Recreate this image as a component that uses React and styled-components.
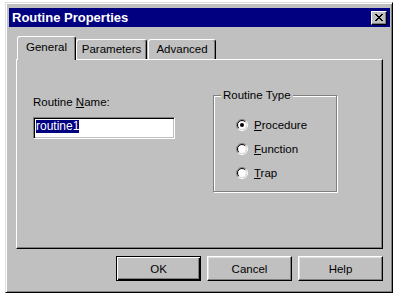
import React from 'react';
import styled, { createGlobalStyle } from 'styled-components';

const Global = createGlobalStyle`
  html, body { margin: 0; padding: 0; background: #fff; }
  body {
    font-family: "Liberation Sans", Arial, sans-serif;
    font-size: 11.5px;
    color: #000;
  }
  * { box-sizing: border-box; }
`;

const Stage = styled.div`
  width: 399px;
  height: 297px;
  padding: 2px 0 0 5px;
  background: #fff;
`;

const Window = styled.div`
  width: 388px;
  height: 291px;
  background: #c0c0c0;
  border: 1px solid;
  border-color: #dfdfdf #000 #000 #dfdfdf;
  box-shadow: inset 1px 1px #fff, inset -1px -1px #808080;
  padding: 5px 2px 2px 3px;
  display: flex;
  flex-direction: column;
`;

const TitleBar = styled.div`
  height: 19px;
  background: #000080;
  display: flex;
  align-items: center;
  justify-content: space-between;
  padding: 0 3px 0 3px;
`;

const Title = styled.span`
  color: #fff;
  font-weight: bold;
  font-size: 13px;
  line-height: 19px;
`;

const CloseButton = styled.button`
  width: 16px;
  height: 14px;
  padding: 0;
  margin: 0;
  background: #c0c0c0;
  border: 1px solid;
  border-color: #fff #000 #000 #fff;
  box-shadow: inset -1px -1px #808080;
  display: flex;
  align-items: center;
  justify-content: center;
`;

const Body = styled.div`
  flex: 1;
  display: flex;
  flex-direction: column;
  padding: 9px 7px 0 7px;
`;

const TabRow = styled.div`
  display: flex;
  align-items: flex-end;
  height: 23px;
  padding-left: 1px;
  position: relative;
  z-index: 1;
`;

const Tab = styled.div`
  height: ${p => (p.$active ? '24px' : '20px')};
  margin-bottom: ${p => (p.$active ? '-1px' : '0')};
  margin-left: ${p => p.$gap || 0}px;
  width: ${p => p.$w}px;
  background: #c0c0c0;
  border-top: 1px solid #fff;
  border-left: 1px solid #fff;
  border-right: 1px solid #000;
  border-radius: 3px 3px 0 0;
  box-shadow: inset -1px 0 #808080;
  display: flex;
  justify-content: center;
  padding-top: ${p => (p.$active ? '4px' : '3px')};
  line-height: 13px;
`;

const Panel = styled.div`
  height: 190px;
  border: 1px solid;
  border-color: #fff #000 #000 #fff;
  box-shadow: inset -1px -1px #808080;
  padding: 35px 0 0 16px;
  display: flex;
  align-items: flex-start;
`;

const NameColumn = styled.div`
  display: flex;
  flex-direction: column;
  margin-top: 1px;
  width: 142px;
`;

const Label = styled.label`
  line-height: 13px;
  height: 13px;
`;

const TextBox = styled.div`
  margin-top: 8px;
  height: 22px;
  width: 142px;
  background: #fff;
  border: 1px solid;
  border-color: #808080 #fff #fff #808080;
  box-shadow: inset 1px 1px #000, inset -1px -1px #c0c0c0;
  padding: 2px 0 0 2px;
  display: flex;
  align-items: flex-start;
`;

const Selected = styled.span`
  background: #000080;
  color: #fff;
  line-height: 13px;
  height: 13px;
  font-size: 12px;
`;

const GroupBox = styled.div`
  position: relative;
  margin-left: 38px;
  width: 124px;
  height: 97px;
  border: 1px solid #808080;
  box-shadow: inset 1px 1px #fff, 1px 1px #fff;
  padding: 17px 0 0 22px;
  display: flex;
  flex-direction: column;
`;

const Legend = styled.span`
  position: absolute;
  top: -7px;
  left: 7px;
  padding: 0 2px;
  background: #c0c0c0;
  line-height: 13px;
`;

const RadioRow = styled.div`
  height: 24px;
  display: flex;
  align-items: center;
  gap: 6px;
  line-height: 13px;
`;

const ButtonRow = styled.div`
  display: flex;
  justify-content: flex-end;
  gap: 6px;
  margin-top: 7px;
`;

const Button = styled.button`
  width: 85px;
  height: 25px;
  padding: 0;
  margin: 0;
  font-family: inherit;
  font-size: 11.5px;
  color: #000;
  background: #c0c0c0;
  border: 1px solid;
  border-color: ${p => (p.$default ? '#000' : '#fff #000 #000 #fff')};
  box-shadow: ${p =>
    p.$default
      ? 'inset 1px 1px #fff, inset -1px -1px #000, inset -2px -2px #808080'
      : 'inset -1px -1px #808080, inset 1px 1px #dfdfdf'};
`;

const CloseGlyph = () => (
  <svg width="8" height="7" viewBox="0 0 8 7" shapeRendering="crispEdges">
    <path
      fill="#000"
      d="M0 0h2v1h-2z M6 0h2v1h-2z M1 1h2v1h-2z M5 1h2v1h-2z M2 2h4v1h-4z M3 3h2v1h-2z M2 4h4v1h-4z M1 5h2v1h-2z M5 5h2v1h-2z M0 6h2v1h-2z M6 6h2v1h-2z"
    />
  </svg>
);

const arc = (r, first) => {
  const a = r * Math.SQRT1_2;
  const p1 = `${6 - a} ${6 + a}`;
  const p2 = `${6 + a} ${6 - a}`;
  return first ? `M${p1} A${r} ${r} 0 0 1 ${p2}` : `M${p2} A${r} ${r} 0 0 1 ${p1}`;
};

const RadioIcon = ({ checked }) => (
  <svg width="12" height="12" viewBox="0 0 12 12">
    <circle cx="6" cy="6" r="4.2" fill="#fff" />
    <path d={arc(5.5, true)} stroke="#808080" fill="none" strokeWidth="1" />
    <path d={arc(5.5, false)} stroke="#fff" fill="none" strokeWidth="1" />
    <path d={arc(4.5, true)} stroke="#000" fill="none" strokeWidth="1" />
    <path d={arc(4.5, false)} stroke="#dfdfdf" fill="none" strokeWidth="1" />
    {checked && <circle cx="6" cy="6" r="2" fill="#000" />}
  </svg>
);

const Radio = ({ checked, accel, rest }) => (
  <RadioRow>
    <RadioIcon checked={checked} />
    <span>
      <u>{accel}</u>
      {rest}
    </span>
  </RadioRow>
);

export default function App() {
  return (
    <>
      <Global />
      <Stage>
        <Window>
          <TitleBar>
            <Title>Routine Properties</Title>
            <CloseButton aria-label="Close">
              <CloseGlyph />
            </CloseButton>
          </TitleBar>
          <Body>
            <TabRow>
              <Tab $active $w={59}>General</Tab>
              <Tab $w={71}>Parameters</Tab>
              <Tab $w={68} $gap={1}>Advanced</Tab>
            </TabRow>
            <Panel>
              <NameColumn>
                <Label>
                  Routine <u>N</u>ame:
                </Label>
                <TextBox>
                  <Selected>routine1</Selected>
                </TextBox>
              </NameColumn>
              <GroupBox>
                <Legend>Routine Type</Legend>
                <Radio checked accel="P" rest="rocedure" />
                <Radio accel="F" rest="unction" />
                <Radio accel="T" rest="rap" />
              </GroupBox>
            </Panel>
            <ButtonRow>
              <Button $default>OK</Button>
              <Button>Cancel</Button>
              <Button>Help</Button>
            </ButtonRow>
          </Body>
        </Window>
      </Stage>
    </>
  );
}
